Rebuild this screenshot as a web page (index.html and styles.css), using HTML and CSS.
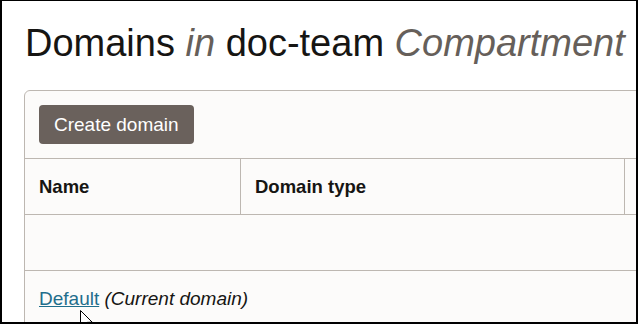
FILE: index.html
```html
<!DOCTYPE html>
<html lang="en">
<head>
  <meta charset="UTF-8" />
  <meta name="viewport" content="width=device-width, initial-scale=1.0" />
  <title>Domains</title>
  <link rel="stylesheet" href="styles.css">
</head>
<body>
  <div class="frame">
    <h1 class="page-title">Domains <em>in</em> doc-team <em>Compartment</em></h1>

    <div class="card">
      <div class="toolbar">
        <button class="create-btn">Create domain</button>
      </div>
      <div class="table">
        <div class="row head">
          <div class="cell name">Name</div>
          <div class="cell type">Domain type</div>
          <div class="cell rest"></div>
        </div>
        <div class="row empty"></div>
        <div class="row item">
          <a href="#" class="link">Default</a> <em>(Current domain)</em>
        </div>
      </div>
    </div>

    <!-- mouse pointer left in the screenshot -->
    <svg class="pointer" width="14" height="22" viewBox="0 0 14 22">
      <path d="M0.5 0.5 L0.5 17 L4.5 13.2 L7.3 19.6 L9.6 18.6 L6.9 12.4 L12.2 12.2 Z" fill="#fff" stroke="#000" stroke-width="1" />
    </svg>
  </div>
</body>
</html>
```

FILE: styles.css
```css
body {
  margin: 0;
  padding: 0;
  background-color: #fff;
  font-family: "Liberation Sans", Arial, sans-serif;
  color: #161513;
}

.frame {
  position: relative;
  width: 638px;
  height: 324px;
  box-sizing: border-box;
  border-style: solid;
  border-color: #000;
  border-width: 1px 2px 2px 2px;
  overflow: hidden;
  padding: 20px 0 0 22px;
}

.page-title {
  margin: 0 0 25px 1px;
  font-size: 38px;
  font-weight: normal;
  line-height: 44px;
  white-space: nowrap;
}

.page-title em {
  color: #665f5a;
}

.card {
  width: 700px;
  background-color: #fcfbfa;
  border: 1px solid #bdb7b1;
  border-radius: 6px;
}

.toolbar {
  padding: 14px;
  border-bottom: 1px solid #bdb7b1;
}

.create-btn {
  display: block;
  height: 39px;
  padding: 0 15px;
  border: none;
  border-radius: 4px;
  background-color: #6a615c;
  color: #fff;
  font-family: "Liberation Sans", Arial, sans-serif;
  font-size: 19px;
}

.row {
  display: flex;
  border-bottom: 1px solid #bdb7b1;
}

.head {
  height: 55px;
}

.cell {
  display: flex;
  align-items: center;
  padding-left: 14px;
  font-size: 18.5px;
  font-weight: bold;
}

.cell.name {
  width: 201px;
  border-right: 1px solid #bdb7b1;
}

.cell.type {
  width: 369px;
  border-right: 1px solid #bdb7b1;
}

.empty {
  height: 55px;
}

.item {
  display: block;
  border-bottom: none;
  padding: 17px 14px;
  font-size: 19px;
}

.link {
  color: #1f6e8c;
}

.item em {
  color: #161513;
}

.pointer {
  position: absolute;
  left: 78px;
  top: 309px;
}
```
